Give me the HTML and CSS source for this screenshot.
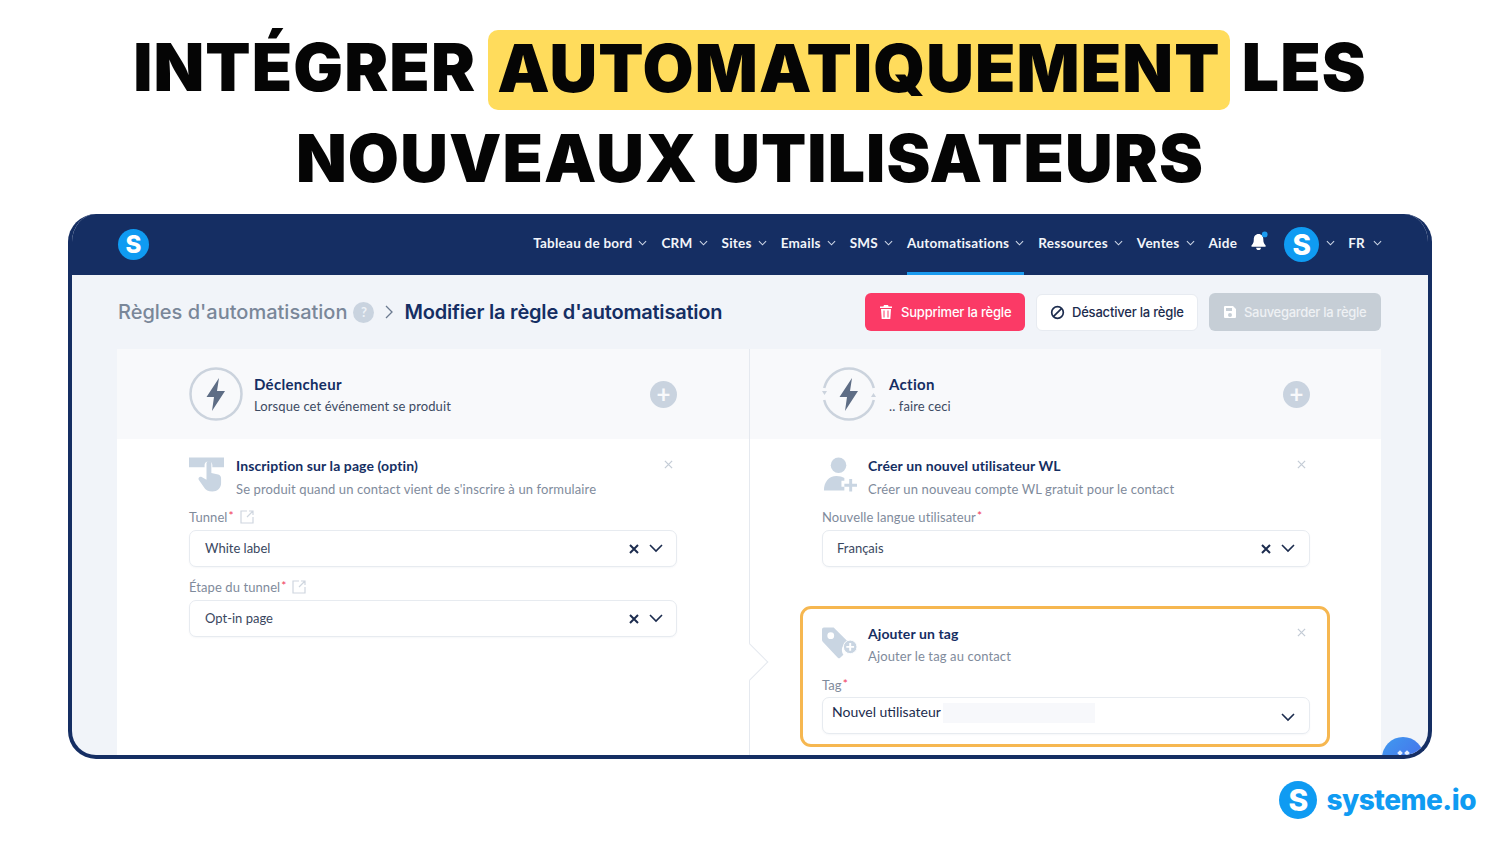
FILE: index.html
```html
<!DOCTYPE html>
<html lang="fr">
<head>
<meta charset="utf-8">
<title>Intégrer automatiquement les nouveaux utilisateurs</title>
<link rel="stylesheet" href="styles.css">
</head>
<body>
<div class="page">
  <h1 class="headline">
    <span class="line">INTÉGRER <mark class="hl">AUTOMATIQUEMENT</mark> LES</span>
    <span class="line">NOUVEAUX UTILISATEURS</span>
  </h1>
  <div class="frame">
    <header class="topbar">
      <span class="logo-s small">S</span>
      <nav class="nav">
        <a class="nav-item">Tableau de bord<svg class="caret" viewBox="0 0 10 6"><path d="M1 1l4 4 4-4"/></svg></a>
        <a class="nav-item">CRM<svg class="caret" viewBox="0 0 10 6"><path d="M1 1l4 4 4-4"/></svg></a>
        <a class="nav-item">Sites<svg class="caret" viewBox="0 0 10 6"><path d="M1 1l4 4 4-4"/></svg></a>
        <a class="nav-item">Emails<svg class="caret" viewBox="0 0 10 6"><path d="M1 1l4 4 4-4"/></svg></a>
        <a class="nav-item">SMS<svg class="caret" viewBox="0 0 10 6"><path d="M1 1l4 4 4-4"/></svg></a>
        <a class="nav-item active">Automatisations<svg class="caret" viewBox="0 0 10 6"><path d="M1 1l4 4 4-4"/></svg></a>
        <a class="nav-item">Ressources<svg class="caret" viewBox="0 0 10 6"><path d="M1 1l4 4 4-4"/></svg></a>
        <a class="nav-item">Ventes<svg class="caret" viewBox="0 0 10 6"><path d="M1 1l4 4 4-4"/></svg></a>
        <a class="nav-item">Aide</a>
        <svg class="bell" viewBox="0 0 20 22"><path fill="#fff" d="M9 3c-3.200 0-5 2.400-5 5.500 0 3.500-.8 5-2.400 6.500v1.500h14.800V15C15 13.500 14 12 14 8.500 14 5.400 12.200 3 9 3z"/><path fill="#fff" d="M6.500 17.500h5c0 1.600-1 2.500-2.500 2.500s-2.500-.9-2.500-2.500z"/><circle cx="15.500" cy="3.500" r="3" fill="#1a9bf0"/></svg>
        <span class="logo-s avatar">S</span>
        <svg class="caret tight" viewBox="0 0 10 6"><path d="M1 1l4 4 4-4"/></svg>
        <a class="nav-item lang">FR<svg class="caret" viewBox="0 0 10 6"><path d="M1 1l4 4 4-4"/></svg></a>
      </nav>
    </header>
    <main class="content">
      <div class="titlebar">
        <div class="crumbs">
          <span class="crumb-root">Règles d'automatisation</span>
          <span class="help">?</span>
          <svg class="crumb-sep" viewBox="0 0 8 14"><path d="M1 1l6 6-6 6"/></svg>
          <span class="crumb-current">Modifier la règle d'automatisation</span>
        </div>
        <div class="actions">
          <button class="btn danger"><svg class="btn-ico" viewBox="0 0 14 14"><path fill="#fff" d="M5 0h4l.6 1.500H13V3H1V1.500h3.400zM2 4h10l-.7 10H2.700zm2.500 1.500v7h1v-7zm4 0v7h1v-7z"/></svg>Supprimer la règle</button>
          <button class="btn ghost"><svg class="btn-ico" viewBox="0 0 16 16"><circle cx="8" cy="8" r="6.200" fill="none" stroke="#1c2c4e" stroke-width="1.800"/><path d="M3.800 12.200l8.400-8.400" stroke="#1c2c4e" stroke-width="1.800"/></svg>Désactiver la règle</button>
          <button class="btn muted"><svg class="btn-ico" viewBox="0 0 14 14"><path fill="#fff" fill-rule="evenodd" d="M2 1h8l3 3v8a1 1 0 0 1-1 1H2a1 1 0 0 1-1-1V2a1 1 0 0 1 1-1zm1 2v3h6V3zm4 5a2 2 0 1 0 0 4 2 2 0 0 0 0-4z"/></svg>Sauvegarder la règle</button>
        </div>
      </div>

      <section class="board">
        <div class="col col-left">
          <div class="col-head">
            <svg class="round-ico" viewBox="0 0 54 54"><circle cx="27" cy="27" r="25.500" fill="none" stroke="#cbd3dd" stroke-width="2.500"/><path fill="#5e6d85" d="M30 11L17.500 30H25l-2 14 13-20h-8z"/></svg>
            <div class="head-text">
              <div class="head-title">Déclencheur</div>
              <div class="head-sub">Lorsque cet événement se produit</div>
            </div>
            <span class="plus">+</span>
          </div>
          <div class="col-body">
            <div class="item">
              <div class="item-head">
                <svg class="item-ico" viewBox="0 0 36 36"><path fill="#c9d5e2" d="M0 0h36v10H24V8a4 4 0 0 0-8 0v2H0z"/><path fill="#c9d5e2" d="M18 6a2.500 2.500 0 0 1 5 0v10l7 1.500c2 .5 3 2 3 4v5c0 5-4 8.500-9 8.500-4 0-7-1.500-9-5l-5-7c-1-2 1-4 3-3l5 3z"/></svg>
                <div class="item-text">
                  <div class="item-title">Inscription sur la page (optin)</div>
                  <div class="item-sub">Se produit quand un contact vient de s'inscrire à un formulaire</div>
                </div>
                <svg class="close" viewBox="0 0 10 10"><path d="M1 1l8 8M9 1l-8 8"/></svg>
              </div>
              <div class="field">
                <div class="label">Tunnel<i class="req">*</i><svg class="ext" viewBox="0 0 14 14"><path d="M7 1H1v12h12V7M7 7l6-6M9 1h4v4"/></svg></div>
                <div class="select"><span class="value">White label</span><svg class="x" viewBox="0 0 10 10"><path d="M1 1l8 8M9 1l-8 8"/></svg><svg class="chev" viewBox="0 0 14 9"><path d="M1 1l6 6 6-6"/></svg></div>
              </div>
              <div class="field">
                <div class="label">Étape du tunnel<i class="req">*</i><svg class="ext" viewBox="0 0 14 14"><path d="M7 1H1v12h12V7M7 7l6-6M9 1h4v4"/></svg></div>
                <div class="select"><span class="value">Opt-in page</span><svg class="x" viewBox="0 0 10 10"><path d="M1 1l8 8M9 1l-8 8"/></svg><svg class="chev" viewBox="0 0 14 9"><path d="M1 1l6 6 6-6"/></svg></div>
              </div>
            </div>
          </div>
        </div>

        <div class="col col-right">
          <span class="notch"></span>
          <div class="col-head">
            <svg class="round-ico" viewBox="0 0 54 54"><path d="M2.200 21A25.500 25.500 0 0 1 51.800 21M51.800 33A25.500 25.500 0 0 1 2.200 33" fill="none" stroke="#cbd3dd" stroke-width="2.500"/><path fill="#cbd3dd" d="M0 24h5l-2.500 4zM49 30h5l-2.500-4z"/><path fill="#5e6d85" d="M30 11L17.500 30H25l-2 14 13-20h-8z"/></svg>
            <div class="head-text">
              <div class="head-title">Action</div>
              <div class="head-sub">.. faire ceci</div>
            </div>
            <span class="plus">+</span>
          </div>
          <div class="col-body">
            <div class="item">
              <div class="item-head">
                <svg class="item-ico" viewBox="0 0 36 36"><circle cx="17" cy="8" r="8" fill="#c9d5e2"/><path fill="#c9d5e2" d="M2 34c0-9 5-15 13-15 3 0 6 1 8 2v3h-3v6h3v4z"/><path fill="#c9d5e2" d="M28 22h3v5h5v3h-5v5h-3v-5h-5v-3h5z"/></svg>
                <div class="item-text">
                  <div class="item-title">Créer un nouvel utilisateur WL</div>
                  <div class="item-sub">Créer un nouveau compte WL gratuit pour le contact</div>
                </div>
                <svg class="close" viewBox="0 0 10 10"><path d="M1 1l8 8M9 1l-8 8"/></svg>
              </div>
              <div class="field">
                <div class="label">Nouvelle langue utilisateur<i class="req">*</i></div>
                <div class="select"><span class="value">Français</span><svg class="x" viewBox="0 0 10 10"><path d="M1 1l8 8M9 1l-8 8"/></svg><svg class="chev" viewBox="0 0 14 9"><path d="M1 1l6 6 6-6"/></svg></div>
              </div>
            </div>
            <div class="item featured">
              <div class="item-head">
                <svg class="item-ico" viewBox="0 0 36 32"><path fill="#c9d5e2" fill-rule="evenodd" d="M0 2a2 2 0 0 1 2-2h10l14 14-5 6a9 9 0 0 0 1 8l-3 3a2 2 0 0 1-3 0L1 15a3 3 0 0 1-1-2zm9 3a3.500 3.500 0 1 0 0 7 3.500 3.500 0 0 0 0-7z"/><circle cx="29" cy="20" r="7" fill="#c9d5e2" stroke="#fff" stroke-width="1"/><path fill="#fff" d="M28 16h2v3h3v2h-3v3h-2v-3h-3v-2h3z"/></svg>
                <div class="item-text">
                  <div class="item-title">Ajouter un tag</div>
                  <div class="item-sub">Ajouter le tag au contact</div>
                </div>
                <svg class="close" viewBox="0 0 10 10"><path d="M1 1l8 8M9 1l-8 8"/></svg>
              </div>
              <div class="field">
                <div class="label">Tag<i class="req">*</i></div>
                <div class="select tag"><span class="value">Nouvel utilisateur</span><span class="smudge"></span><svg class="chev" viewBox="0 0 14 9"><path d="M1 1l6 6 6-6"/></svg></div>
              </div>
            </div>
          </div>
        </div>
      </section>
    </main>
    <span class="fab"><i class="spark"></i><i class="spark"></i></span>
  </div>
  <footer class="brand">
    <span class="logo-s big">S</span>
    <span class="brand-name">systeme.io</span>
  </footer>
</div>
</body>
</html>
```
FILE: styles.css
```css
* { box-sizing: border-box; }
html, body { margin: 0; padding: 0; background: #fff; }
body { font-family: "Lato", "Noto Sans", sans-serif; color: #1c2c4e; }
button { font: inherit; }
.page { width: 1500px; height: 844px; overflow: hidden; display: flex; flex-direction: column; }

.headline { margin: 0; padding-top: 21px; height: 214px; text-align: center; font-family: "Inter", sans-serif; font-weight: 900; font-size: 66px; letter-spacing: 1.1px; color: #050505; }
.line { display: block; height: 91px; line-height: 92px; }
.hl { display: inline-block; height: 80px; line-height: 77px; padding: 0 9px; margin: 9px -2px 0; background: #ffdc5c; color: inherit; border-radius: 10px; vertical-align: top; }

.frame { position: relative; flex: none; height: 545px; margin: 0 68px; border: 4px solid #152e63; border-top-width: 0; border-radius: 28px; overflow: hidden; background: #f1f4f9; display: flex; flex-direction: column; }
.topbar { flex: none; height: 61px; margin: 0 -4px; background: #152e63; display: flex; align-items: center; justify-content: space-between; padding: 0 50px; }

.logo-s { display: inline-flex; align-items: center; justify-content: center; border-radius: 50%; background: #0f9bf2; color: #fff; font-family: "Inter", sans-serif; font-weight: 800; flex: none; }
.small { width: 31px; height: 31px; font-size: 24px; }
.avatar { width: 35px; height: 35px; font-size: 28px; margin-left: 15px; }
.big { width: 38px; height: 38px; font-size: 30px; }

.nav { display: flex; align-items: center; height: 100%; }
.nav-item { position: relative; display: flex; align-items: center; height: 100%; padding-bottom: 4px; margin-left: 14px; color: #f2f5fa; font-size: 13.500px; font-weight: 700; letter-spacing: .25px; }
.nav-item:first-child { margin-left: 0; }
.nav-item.active::after { content: ""; position: absolute; left: 0; right: 0; bottom: 0; height: 3px; background: #1a9bf0; }
.caret { width: 9px; height: 6px; margin-left: 6px; fill: none; stroke: #cdd6e6; stroke-width: 1.200; }
.caret.tight { margin: 0 0 4px 7px; }
.lang { margin-left: 13px; }
.lang .caret { margin-left: 8px; }
.bell { width: 19px; height: 21px; margin: 0 0 6px 13px; }

.content { flex: 1; min-height: 0; padding: 0 47px 0 45px; }
.titlebar { display: flex; justify-content: space-between; align-items: center; height: 74px; }
.crumbs { display: flex; align-items: center; margin-left: 1px; }
.crumb-root { font-family: "Inter", sans-serif; font-size: 20px; font-weight: 500; color: #7a8799; }
.help { width: 21px; height: 21px; margin-left: 6px; border-radius: 50%; background: #c9d3df; color: #eef2f7; font-size: 13px; font-weight: 700; display: flex; align-items: center; justify-content: center; }
.crumb-sep { width: 8px; height: 14px; margin: 0 11px; fill: none; stroke: #6b7a90; stroke-width: 1.300; }
.crumb-current { font-family: "Inter", sans-serif; font-size: 20px; font-weight: 600; color: #152e63; letter-spacing: -.2px; }

.actions { display: flex; align-items: center; gap: 11px; }
.btn { display: flex; align-items: center; height: 38px; border: 0; border-radius: 6px; font-family: "Inter", sans-serif; font-size: 13px; letter-spacing: -.2px; font-weight: 500; padding: 0; white-space: nowrap; }
.btn-ico { width: 14px; height: 14px; margin-right: 9px; }
.danger { width: 160px; background: #fb3a66; color: #fff; padding-left: 14px; }
.danger .btn-ico { margin-right: 8px; }
.ghost { width: 162px; height: 37px; background: #fff; color: #1c2c4e; border: 1px solid #e7ebf1; padding-left: 13px; }
.ghost .btn-ico { width: 15px; height: 15px; margin-right: 7px; }
.muted { width: 172px; background: #c6ced6; color: #eef1f4; padding-left: 14px; letter-spacing: -.3px; }
.muted .btn-ico { margin-right: 7px; }

.board { display: grid; grid-template-columns: 632px 632px; height: 420px; }
.col { position: relative; background: #fff; display: flex; flex-direction: column; }
.col-left { border-radius: 8px 0 0 0; }
.col-right { border-left: 1px solid #e5e9ef; border-radius: 0 8px 0 0; }
.col-head { flex: none; height: 90px; background: #f8f9fb; display: flex; align-items: center; padding-left: 72px; }
.round-ico { width: 54px; height: 54px; flex: none; }
.head-text { width: 396px; margin-left: 11px; }
.col-right .head-text { margin-left: 13px; width: 394px; }
.head-title { font-size: 15px; font-weight: 700; color: #152e63; line-height: 20px; letter-spacing: .3px; }
.head-sub { margin-top: 3px; font-size: 13px; color: #3d4b63; line-height: 18px; letter-spacing: .1px; }
.plus { width: 27px; height: 27px; border-radius: 50%; background: #c9d3df; color: #f8f9fb; font-size: 24px; font-weight: 700; line-height: 26px; text-align: center; }

.col-body { flex: 1; padding: 0 72px; }
.col-right .col-body { padding: 0 71px 0 72px; }
.item { position: relative; padding-top: 18px; }
.item-head { display: flex; height: 50px; }
.item-ico { width: 35px; height: 36px; flex: none; }
.item-text { flex: 1; margin-left: 12px; }
.col-right .item-text { margin-left: 11px; }
.item-title { font-size: 14px; font-weight: 700; line-height: 18px; color: #152e63; letter-spacing: .1px; }
.item-sub { margin-top: 5px; font-size: 13px; line-height: 18px; color: #7f8b9c; letter-spacing: .12px; }
.close { width: 9px; height: 9px; margin: 3px 4px 0 0; fill: none; stroke: #c4ccd6; stroke-width: 1.400; }

.field + .field { margin-top: 10px; }
.label { display: flex; align-items: center; height: 20px; font-size: 13px; color: #7f8b9c; letter-spacing: .08px; }
.req { color: #f0385a; font-style: normal; margin-left: 1px; align-self: flex-start; font-size: 12px; line-height: 18px; }
.ext { width: 14px; height: 14px; margin-left: 6px; fill: none; stroke: #cfd6df; stroke-width: 1.200; }
.select { display: flex; align-items: center; height: 37px; margin-top: 3px; padding: 0 13px 0 15px; background: #fff; border: 1px solid #e7ebf0; border-radius: 7px; box-shadow: 0 1px 2px rgba(30,50,90,.04); }
.col-right .select { padding: 0 14px 0 14px; }
.value { flex: 1; font-size: 13px; color: #3a4760; margin-bottom: 1px; }
.x { width: 10px; height: 10px; fill: none; stroke: #1c2c4e; stroke-width: 2; }
.chev { width: 14px; height: 9px; margin-left: 10px; fill: none; stroke: #1c2c4e; stroke-width: 1.600; }

.featured { margin: 39px -20px 0 -22px; padding: 16px 17px 0 19px; height: 141px; border: 3px solid #f6b750; border-radius: 11px; }
.featured .item-sub { margin-top: 4px; }
.col-right .tag { padding-left: 9px; margin-top: 2px; }
.tag .value { flex: none; font-size: 14px; color: #1c2c4e; margin-bottom: 8px; }
.smudge { flex: 1; height: 20px; max-width: 152px; margin: 0 0 6px 2px; background: #f7f8fb; }
.tag .chev { margin-left: auto; margin-top: 3px; }

.notch { position: absolute; left: -13px; top: 300px; width: 26px; height: 26px; background: #fff; border-top: 1px solid #e5e9ef; border-right: 1px solid #e5e9ef; transform: rotate(45deg); }

.fab { position: absolute; right: 4px; top: 523px; width: 42px; height: 42px; border-radius: 50%; background: linear-gradient(135deg, #3f9bf0, #4a63e8); display: flex; justify-content: center; gap: 3px; padding-top: 14px; }
.spark { width: 4px; height: 4px; background: #e6f0ff; transform: rotate(45deg); }

.brand { flex: 1; display: flex; justify-content: flex-end; align-items: flex-start; gap: 9px; padding: 22px 24px 0 0; }
.brand-name { font-family: "Inter", sans-serif; font-weight: 800; font-size: 28px; line-height: 38px; color: #0f9bf2; letter-spacing: -.5px; }
```
